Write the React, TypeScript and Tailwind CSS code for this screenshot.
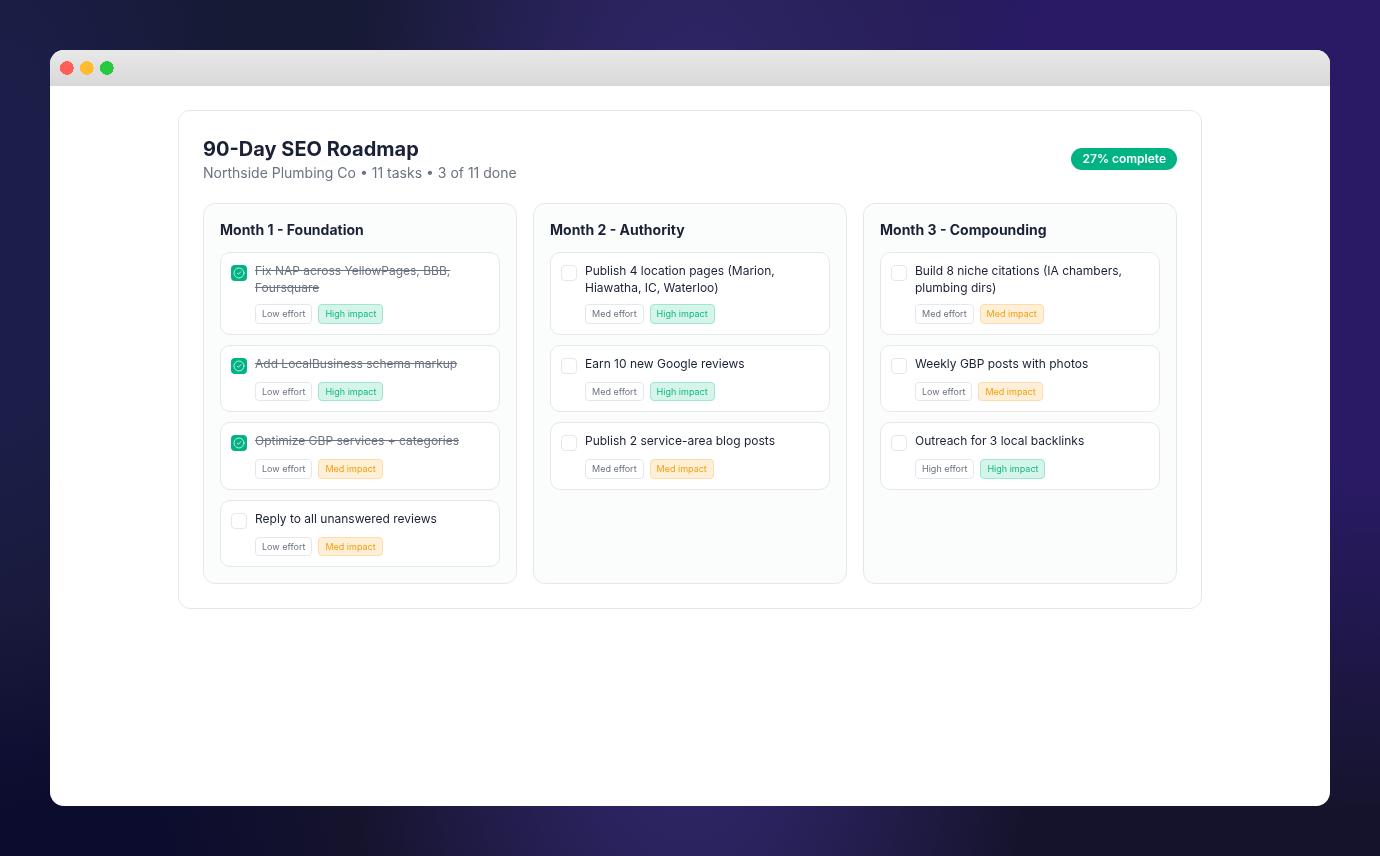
import React from "react";

type Task = { text: string; effort: string; impact: "High" | "Med"; done?: boolean };
type Month = { title: string; tasks: Task[] };

const months: Month[] = [
  {
    title: "Month 1 - Foundation",
    tasks: [
      { text: "Fix NAP across YellowPages, BBB, Foursquare", effort: "Low", impact: "High", done: true },
      { text: "Add LocalBusiness schema markup", effort: "Low", impact: "High", done: true },
      { text: "Optimize GBP services + categories", effort: "Low", impact: "Med", done: true },
      { text: "Reply to all unanswered reviews", effort: "Low", impact: "Med" },
    ],
  },
  {
    title: "Month 2 - Authority",
    tasks: [
      { text: "Publish 4 location pages (Marion, Hiawatha, IC, Waterloo)", effort: "Med", impact: "High" },
      { text: "Earn 10 new Google reviews", effort: "Med", impact: "High" },
      { text: "Publish 2 service-area blog posts", effort: "Med", impact: "Med" },
    ],
  },
  {
    title: "Month 3 - Compounding",
    tasks: [
      { text: "Build 8 niche citations (IA chambers, plumbing dirs)", effort: "Med", impact: "Med" },
      { text: "Weekly GBP posts with photos", effort: "Low", impact: "Med" },
      { text: "Outreach for 3 local backlinks", effort: "High", impact: "High" },
    ],
  },
];

function Check({ done }: { done?: boolean }) {
  if (!done) {
    return <div className="mt-[2px] h-4 w-4 shrink-0 rounded-[4px] border border-[#e5e7eb] bg-white" />;
  }
  return (
    <div className="mt-[2px] flex h-4 w-4 shrink-0 items-center justify-center rounded-[4px] bg-[#00b383]">
      <svg width="12" height="12" viewBox="0 0 24 24" fill="none" stroke="white" strokeWidth="1.7" strokeLinecap="round" strokeLinejoin="round" opacity="0.85">
        <circle cx="12" cy="12" r="10" />
        <path d="M8.5 12.5l2.5 2 4.5-5" />
      </svg>
    </div>
  );
}

function Dot({ color }: { color: string }) {
  return (
    <svg width="14" height="14" viewBox="0 0 14 14" className="shrink-0">
      <circle cx="6.75" cy="7" r="6.9" fill={color} shapeRendering="crispEdges" />
    </svg>
  );
}

function TaskCard({ task }: { task: Task }) {
  return (
    <div className="rounded-[10px] border border-[#e5e7eb] bg-white p-[10px]">
      <div className="flex gap-2">
        <Check done={task.done} />
        <div className={task.done ? "text-[12px] leading-[1.4] text-[#6b7280] line-through" : "text-[12px] leading-[1.4] text-[#1a2035]"}>
          {task.text}
        </div>
      </div>
      <div className="mt-[7.8px] flex gap-[6px] pl-6">
        <span className="rounded-[4px] border border-[#e5e7eb] bg-white px-[6px] py-[3px] text-[9px] leading-[11.6px] text-[#6b7280]">
          {task.effort} effort
        </span>
        {task.impact === "High" ? (
          <span className="rounded-[4px] border border-[#9fe6cd] bg-[#d6f5ea] px-[6px] py-[3px] text-[9px] leading-[11.6px] text-[#10b981]">
            High impact
          </span>
        ) : (
          <span className="rounded-[4px] border border-[#fddcae] bg-[#ffefd6] px-[6px] py-[3px] text-[9px] leading-[11.6px] text-[#f59e0b]">
            Med impact
          </span>
        )}
      </div>
    </div>
  );
}

export default function App() {
  return (
    <div className="h-[856px] w-[1380px] overflow-hidden bg-[radial-gradient(ellipse_360px_1000px_at_50%_50%,#2e2566_35%,rgba(46,37,102,0)_100%),radial-gradient(ellipse_720px_680px_at_100%_15%,#2a1a66_50%,rgba(42,26,102,0)_100%),radial-gradient(ellipse_240px_560px_at_0%_30%,#1b1e48_30%,rgba(26,29,72,0)_100%),radial-gradient(ellipse_360px_240px_at_0%_100%,#0c0c2e_45%,rgba(12,12,46,0)_100%),linear-gradient(180deg,#171a35_0%,#15132c_100%)] p-[50px] font-['Inter',sans-serif]">
      <div className="flex h-[756px] w-[1280px] flex-col overflow-hidden rounded-[14px] bg-white will-change-transform">
        <div className="flex h-9 shrink-0 items-center gap-[6px] bg-[linear-gradient(180deg,#e8e8e8,#d8d8d8)] pl-[10px]">
          <Dot color="#ff5f57" />
          <Dot color="#febc2e" />
          <Dot color="#28c840" />
        </div>
        <div className="flex-1 px-[128px] pt-6">
          <div className="rounded-xl border border-[#e5e7eb] bg-white p-6">
            <div className="mb-5 flex items-center justify-between">
              <div>
                <h1 className="text-[20px] font-bold leading-[28px] text-[#1a2035]">90-Day SEO Roadmap</h1>
                <p className="text-[14px] leading-[20px] text-[#6b7280]">Northside Plumbing Co • 11 tasks • 3 of 11 done</p>
              </div>
              <span className="rounded-full bg-[#00b383] px-[11px] py-[3px] text-[12px] font-semibold leading-4 text-white">27% complete</span>
            </div>
            <div className="grid grid-cols-3 gap-4">
              {months.map((m) => (
                <div key={m.title} className="rounded-xl border border-[#e5e7eb] bg-[#fbfdfc] p-4">
                  <h2 className="mb-3 text-[14px] font-bold leading-[20px] text-[#1a2035]">{m.title}</h2>
                  <div className="flex flex-col gap-[10px]">
                    {m.tasks.map((t) => (
                      <TaskCard key={t.text} task={t} />
                    ))}
                  </div>
                </div>
              ))}
            </div>
          </div>
        </div>
      </div>
    </div>
  );
}
